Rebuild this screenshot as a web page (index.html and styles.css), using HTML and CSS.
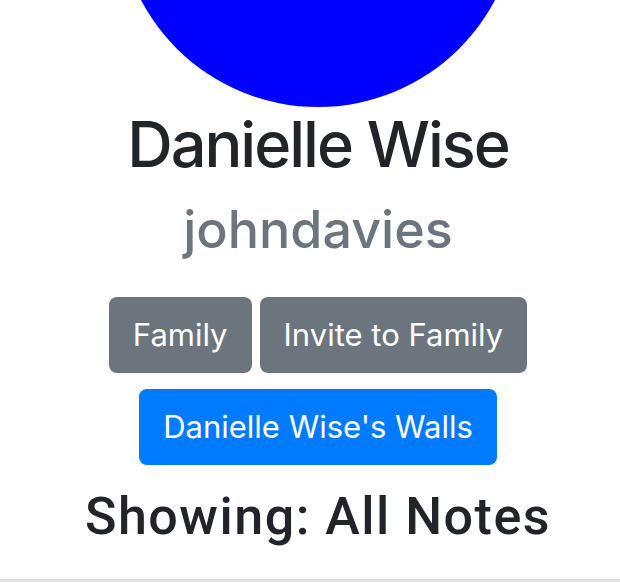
FILE: index.html
```html
<!DOCTYPE html>
<html>
<head>
<meta charset="utf-8">
<link rel="stylesheet" href="styles.css">
</head>
<body>
<div class="page">
  <div class="profile">
    <div class="avatar"></div>
    <h2 class="name">Danielle Wise</h2>
    <h3 class="username">johndavies</h3>
    <div class="actions">
      <a class="btn btn-secondary">Family</a>
      <a class="btn btn-secondary">Invite to Family</a>
    </div>
    <div class="actions actions-walls">
      <a class="btn btn-primary">Danielle Wise's Walls</a>
    </div>
    <h3 class="showing">Showing: All Notes</h3>
  </div>
  <div class="divider"></div>
</div>
</body>
</html>
```

FILE: styles.css
```css
html, body {
  margin: 0;
  padding: 0;
  background: #fff;
  overflow: hidden;
}
body {
  height: 582px;
  font-family: Inter, "Noto Sans", sans-serif;
  color: #212529;
}
.page {
  height: 582px;
  display: flex;
  flex-direction: column;
  padding-left: 16px;
  box-sizing: border-box;
}
.profile {
  flex: 1;
  display: flex;
  flex-direction: column;
  align-items: center;
  overflow: hidden;
}
.avatar {
  flex: none;
  width: 400px;
  height: 400px;
  border-radius: 50%;
  background: #0000ff;
  margin-top: -293px;
}
.name {
  margin: 0 0 16px;
  font-size: 63px;
  font-weight: 500;
  line-height: 1.2;
  letter-spacing: -2px;
}
.username {
  margin: 0;
  font-size: 52px;
  font-weight: 500;
  line-height: 1.2;
  color: #6c757d;
}
.actions {
  display: flex;
  gap: 8px;
  margin-top: 36px;
}
.actions-walls {
  margin-top: 16px;
}
.btn {
  display: block;
  height: 76px;
  box-sizing: border-box;
  padding: 12px 24px;
  font-size: 31px;
  line-height: 52px;
  border-radius: 8px;
  color: #fff;
}
.btn-secondary {
  background: #6c757d;
}
.btn-primary {
  background: #007bff;
}
.showing {
  margin: 21px 0 0;
  font-family: Roboto, "Liberation Sans", Arial, sans-serif;
  font-size: 52px;
  font-weight: 500;
  line-height: 1.2;
  letter-spacing: 1.5px;
}
.divider {
  flex: none;
  height: 3px;
  margin-left: -16px;
  background: #e2e2e2;
}
```
